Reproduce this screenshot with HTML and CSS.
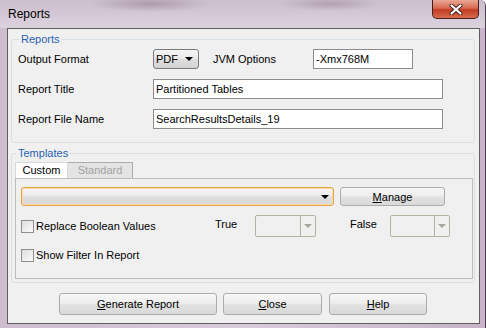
FILE: index.html
```html
<!DOCTYPE html>
<html lang="en">
<head>
  <meta charset="UTF-8" />
  <title>Reports</title>
  <link rel="stylesheet" href="styles.css">
</head>
<body>
  <div class="window">
    <div class="titlebar">
      <span class="title">Reports</span>
      <div class="close-btn">
        <svg width="14" height="11" viewBox="0 0 14 11">
          <path d="M2.5 1.5 L11.5 9.5 M11.5 1.5 L2.5 9.5" stroke="#3b2422" stroke-width="4" stroke-linecap="round" fill="none"/>
          <path d="M2.5 1.5 L11.5 9.5 M11.5 1.5 L2.5 9.5" stroke="#ffffff" stroke-width="2.2" stroke-linecap="round" fill="none"/>
        </svg>
      </div>
    </div>

    <div class="client">
      <fieldset class="group reports">
        <legend>Reports</legend>
        <div class="row">
          <label class="lbl">Output Format</label>
          <div class="select pdf"><span>PDF</span><span class="arrow"></span></div>
          <label class="lbl jvm">JVM Options</label>
          <input type="text" class="field short" value="-Xmx768M">
        </div>
        <div class="row">
          <label class="lbl">Report Title</label>
          <input type="text" class="field wide" value="Partitioned Tables">
        </div>
        <div class="row">
          <label class="lbl">Report File Name</label>
          <input type="text" class="field wide" value="SearchResultsDetails_19">
        </div>
      </fieldset>

      <fieldset class="group templates">
        <legend>Templates</legend>
        <div class="tabs">
          <div class="tab active">Custom</div>
          <div class="tab disabled">Standard</div>
        </div>
        <div class="tab-panel">
          <div class="panel-row">
            <div class="combo focused"><span class="arrow"></span></div>
            <button class="btn manage"><u>M</u>anage</button>
          </div>
          <div class="check-row first">
            <div class="check-label"><span class="box"></span><span>Replace Boolean Values</span></div>
            <span class="bool-lbl">True</span>
            <div class="combo disabled"><span class="drop"><span class="arrow"></span></span></div>
            <span class="bool-lbl false">False</span>
            <div class="combo disabled narrow"><span class="drop"><span class="arrow"></span></span></div>
          </div>
          <div class="check-row">
            <div class="check-label"><span class="box"></span><span>Show Filter In Report</span></div>
          </div>
        </div>
      </fieldset>

      <div class="actions">
        <button class="btn generate"><u>G</u>enerate Report</button>
        <button class="btn close"><u>C</u>lose</button>
        <button class="btn help"><u>H</u>elp</button>
      </div>
    </div>
  </div>
</body>
</html>
```

FILE: styles.css
```css
body {
  margin: 0;
  font-family: "Liberation Sans", Arial, sans-serif;
  font-size: 11px;
  color: #000;
  overflow: hidden;
}

.window {
  width: 486px;
  height: 328px;
  box-sizing: border-box;
  background: linear-gradient(to right, #cdbdcf, #d8cbda 50%, #c8b3ca);
  border-right: 1px solid #4f3f52;
  border-top-right-radius: 6px;
  overflow: hidden;
}

.titlebar {
  height: 28px;
  display: flex;
  justify-content: space-between;
  align-items: flex-start;
  background:
    radial-gradient(ellipse 60px 8px at 150px 4px, rgba(110, 90, 110, 0.35), transparent),
    radial-gradient(ellipse 50px 7px at 330px 4px, rgba(110, 90, 110, 0.3), transparent),
    linear-gradient(#cbbecd, #dcd2de);
}

.title {
  font-size: 12px;
  line-height: 14px;
  margin: 7px 0 0 8px;
}

.close-btn {
  width: 47px;
  height: 19px;
  margin-right: 6px;
  box-sizing: border-box;
  border: 1px solid #4a1f1a;
  border-top: none;
  border-radius: 0 0 5px 5px;
  background: linear-gradient(#eba897, #d86a52 45%, #c43c22 55%, #d46c4c);
  display: flex;
  align-items: center;
  justify-content: center;
}

.client {
  margin-left: 7px;
  width: 473px;
  height: 296px;
  box-sizing: border-box;
  border: 1px solid #5f5f5f;
  background: #f0f0f0;
  padding-top: 3px;
}

.group {
  margin: 0 4px 0 3px;
  padding: 0;
  border: 1px solid #d5dfe5;
  border-radius: 3px;
  min-width: 0;
}

legend {
  color: #2a62b0;
  font-size: 11px;
  line-height: 14px;
  padding: 0 2px;
  margin-left: 1px;
}

.reports {
  padding: 3px 0 13px 6px;
}

.row {
  display: flex;
  align-items: center;
  height: 20px;
}

.row + .row {
  margin-top: 10px;
}

.lbl {
  width: 135px;
}

.lbl.jvm {
  margin-left: 14px;
  width: 100px;
}

.field {
  height: 20px;
  box-sizing: border-box;
  border: 1px solid #8c8c8c;
  padding: 0 2px;
  font: inherit;
  background: #fff;
  outline: none;
}

.field.short {
  width: 100px;
}

.field.wide {
  width: 290px;
}

.select {
  box-sizing: border-box;
  height: 20px;
  border: 1px solid #7a7a7a;
  border-radius: 3px;
  background: linear-gradient(#f4f4f4, #ebebeb 45%, #dddddd 55%, #d3d3d3);
  display: flex;
  align-items: center;
  justify-content: space-between;
  padding: 0 5px 0 2px;
}

.select.pdf {
  width: 46px;
}

.arrow {
  width: 0;
  height: 0;
  border-left: 4px solid transparent;
  border-right: 4px solid transparent;
  border-top: 4px solid #000;
}

.templates {
  margin-top: 3px;
  padding: 2px 1px 3px 3px;
}

.tabs {
  display: flex;
  height: 16px;
}

.tab {
  box-sizing: border-box;
  height: 16px;
  line-height: 14px;
  text-align: center;
}

.tab.active {
  width: 53px;
  background: #fff;
  border: 1px solid #d9d9d9;
  border-bottom: none;
}

.tab.disabled {
  width: 65px;
  background: #e4e4e4;
  color: #a3a3a3;
  border: 1px solid #adadad;
  border-left: none;
  border-bottom: none;
}

.tab-panel {
  border: 1px solid #bdbdbd;
  padding: 8px 0 12px 5px;
}

.panel-row {
  display: flex;
  height: 19px;
}

.combo {
  box-sizing: border-box;
  height: 19px;
  border-radius: 3px;
}

.combo.focused {
  width: 313px;
  border: 1px solid #e5a443;
  box-shadow: inset 0 0 0 1px #fbdca6;
  background: linear-gradient(#f7f7f7, #ececec 45%, #dedede 55%, #d9d9d9);
  display: flex;
  align-items: center;
  justify-content: flex-end;
  padding-right: 4px;
}

.btn {
  box-sizing: border-box;
  border: 1px solid #acacac;
  border-radius: 3px;
  background: linear-gradient(#f7f7f7, #eeeeee 45%, #e1e1e1 55%, #d9d9d9);
  font: inherit;
  color: #000;
  padding: 0;
}

.btn.manage {
  width: 105px;
  height: 19px;
  margin-left: 6px;
}

.check-row {
  display: flex;
  align-items: center;
  height: 22px;
  margin-top: 7px;
}

.check-row.first {
  margin-top: 9px;
}

.check-label {
  display: flex;
  align-items: center;
  width: 194px;
}

.box {
  width: 13px;
  height: 13px;
  box-sizing: border-box;
  border: 1px solid #8e8f8f;
  background: linear-gradient(135deg, #dcdcdc, #fbfbfb);
  margin-right: 2px;
}

.bool-lbl {
  width: 40px;
  margin-top: -4px;
}

.bool-lbl.false {
  margin-left: 34px;
}

.combo.disabled {
  width: 61px;
  height: 22px;
  border: 1px solid #b0b4a2;
  border-radius: 2px;
  background: #f0f0f0;
  display: flex;
  justify-content: flex-end;
}

.combo.disabled.narrow {
  width: 60px;
}

.drop {
  width: 14px;
  border-left: 1px solid #b0b4a2;
  display: flex;
  align-items: center;
  justify-content: center;
}

.drop .arrow {
  border-left-width: 4px;
  border-right-width: 4px;
  border-top: 4px solid #a4a69c;
}

.actions {
  display: flex;
  margin-top: 10px;
  padding-left: 51px;
}

.actions .btn {
  height: 22px;
}

.btn.generate {
  width: 158px;
}

.btn.close {
  width: 99px;
  margin-left: 6px;
}

.btn.help {
  width: 98px;
  margin-left: 7px;
}
```
